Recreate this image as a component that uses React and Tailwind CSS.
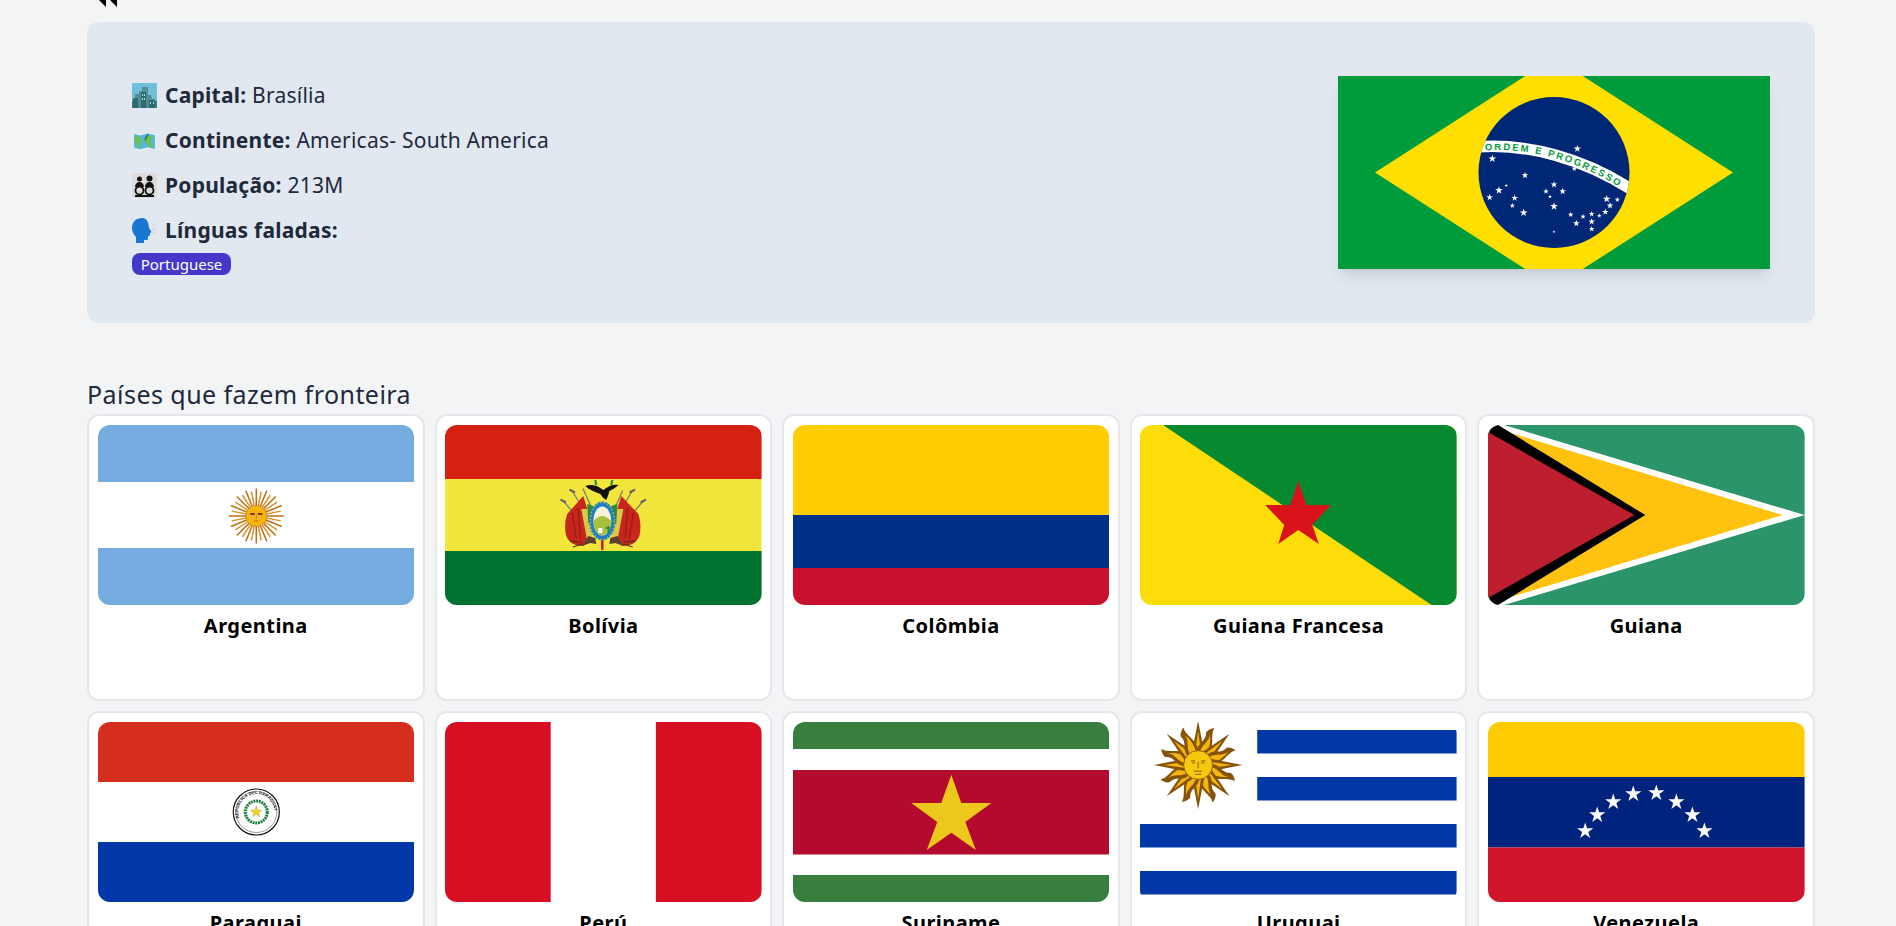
import React from "react";

const starPoints = (cx, cy, r, inner = 0.382, sy = 1) => {
  const pts = [];
  for (let i = 0; i < 10; i++) {
    const rad = i % 2 === 0 ? r : r * inner;
    const a = (Math.PI / 5) * i - Math.PI / 2;
    pts.push(`${cx + rad * Math.cos(a)},${cy + rad * sy * Math.sin(a)}`);
  }
  return pts.join(" ");
};

function Flag({ children, className = "w-full h-[180px] rounded-xl" }) {
  return (
    <svg viewBox="0 0 316 180" preserveAspectRatio="none" className={`block ${className}`}>
      {children}
    </svg>
  );
}

function Argentina() {
  const rays = Array.from({ length: 32 }, (_, i) => i * 11.25);
  return (
    <Flag>
      <rect width="316" height="180" fill="#74acdf" />
      <rect y="57" width="316" height="66" fill="#fff" />
      <g transform="translate(158 91)">
        {rays.map((a, i) => (
          <line key={a} x1="0" y1="-9" x2="0" y2={i % 2 ? -25 : -27.5} stroke={i % 2 ? "#d9942a" : "#b9701f"} strokeWidth="1.5" transform={`rotate(${a})`} />
        ))}
        <circle r="10.5" fill="#f6b40e" stroke="#c98212" strokeWidth="0.6" />
        <path d="M-6 -3h4.5v2h-4.5zM1.5 -3h4.5v2h-4.5z" fill="#85340a" />
        <path d="M0 -1v4M-2 5h4" stroke="#a8641a" strokeWidth="0.8" fill="none" />
      </g>
    </Flag>
  );
}

function Bolivia() {
  return (
    <Flag>
      <rect width="316" height="54" fill="#d52111" />
      <rect y="54" width="316" height="72" fill="#f2e63d" />
      <rect y="126" width="316" height="54" fill="#007230" />
      <g strokeLinecap="round">
        <path d="M118 76l14 16M127 66l11 18M138 64l7 16M198 76l-14 16M187 66l-11 18M177 66l-6 14" stroke="#7d7d70" strokeWidth="1.3" />
        <path d="M116 75l4 2M125 65l4 2M200 75l-4 2M189 65l-4 2" stroke="#666" strokeWidth="2.2" />
        <path d="M138 71l5 16-1 30-4 4c-8 0-14-3-17-10-2-8-1-16 1-22z" fill="#c8261c" />
        <path d="M176 71l-5 16 1 30 5 4c8 0 14-3 17-10 2-8 1-16-1-22z" fill="#c8261c" />
        <path d="M127 88l4 25M133 83l2 30M188 88l-4 25M182 83l-2 30" stroke="#8f1c14" strokeWidth="1.2" />
        <path d="M136 84l8 0 3 28-5 4zM178 84l-8 0-3 28 5 4z" fill="#d8c94a" />
        <path d="M142 79l6 2-1 19-4-2zM172 79l-6 2 1 19 4-2z" fill="#2a8a3a" />
        <path d="M137 121l6-10 7 2 1 6-6-1zM178 121l-6-10-7 2-1 6 6-1z" fill="#5c4030" />
        <path d="M125 116l11 1M128 122l9-3M190 116l-11 1M187 122l-9-3" stroke="#443322" strokeWidth="1" />
        <path d="M157 113v11" stroke="#c8261c" strokeWidth="2.6" />
      </g>
      <ellipse cx="157" cy="96" rx="13" ry="19.5" fill="#1c7fc2" />
      <ellipse cx="157" cy="96" rx="12" ry="18.5" fill="none" stroke="#e5c93c" strokeWidth="1" strokeDasharray="1.5 2" />
      <ellipse cx="157" cy="96" rx="9" ry="14.5" fill="#f7f2d8" />
      <path d="M148 96c3-3 6-5 9-5s6 2 9 5c0 8-4 14-9 14s-9-6-9-14z" fill="#a9bf3e" />
      <path d="M163 101v7M160 103h6" stroke="#2a8a3a" strokeWidth="1.6" />
      <rect x="153" y="103" width="4" height="5" fill="#fff" />
      <path d="M140 61c5-2 11-1 15 2l3 2 3-2c4-3 8-4 12-3-3 3-6 5-9 6l-1 4-2 5-3-2-3-4c-5-2-11-4-15-8z" fill="#111" />
      <path d="M150 55l1 5M167 55l-1 5" stroke="#2a8a3a" strokeWidth="2.2" />
    </Flag>
  );
}

function Colombia() {
  return (
    <Flag>
      <rect width="316" height="90" fill="#ffcd00" />
      <rect y="90" width="316" height="53" fill="#003087" />
      <rect y="143" width="316" height="37" fill="#c8102e" />
    </Flag>
  );
}

function FrenchGuiana() {
  return (
    <Flag>
      <rect width="316" height="180" fill="#fcdd09" />
      <polygon points="23,0 316,0 316,180 291,180" fill="#078930" />
      <polygon points="158,56 166,80 190.500,80 172,100 178.500,119 158,105 138,119 144,100 125,80 150,80" fill="#da121a" />
    </Flag>
  );
}

function Guyana() {
  return (
    <Flag>
      <rect width="316" height="180" fill="#2b9469" />
      <polygon points="0,0 16,0 316,90 16,180 0,180" fill="#fff" />
      <polygon points="0,1 294,90 0,179" fill="#fec20f" />
      <polygon points="0,0 10,0 157,90 10,180 0,180" fill="#000" />
      <polygon points="0,7 146,90 0,173" fill="#bd1f2f" />
    </Flag>
  );
}

function Paraguay() {
  return (
    <Flag>
      <rect width="316" height="60" fill="#d62e1c" />
      <rect y="60" width="316" height="60" fill="#fff" />
      <rect y="120" width="316" height="60" fill="#0038a8" />
      <g transform="translate(158 90)">
        <circle r="23" fill="#fff" stroke="#111" strokeWidth="1.2" />
        <circle r="20.5" fill="none" stroke="#333" strokeWidth="0.5" />
        <path id="pySeal" d="M-17 6A18 18 0 1 1 17 6" fill="none" />
        <text fontSize="4.4" fontWeight="700" fill="#222" fontFamily="Liberation Sans, sans-serif">
          <textPath href="#pySeal">REPUBLICA DEL PARAGUAY</textPath>
        </text>
        <circle r="11" fill="none" stroke="#1e8040" strokeWidth="3" strokeDasharray="2 0.7" />
        <polygon points={starPoints(0, 0, 6)} fill="#f7d417" stroke="#8a7a10" strokeWidth="0.3" />
      </g>
    </Flag>
  );
}

function Peru() {
  return (
    <Flag>
      <rect width="316" height="180" fill="#d91023" />
      <rect x="105.5" width="105" height="180" fill="#fff" />
    </Flag>
  );
}

function Suriname() {
  return (
    <Flag>
      <rect width="316" height="180" fill="#377e3f" />
      <rect y="27" width="316" height="126" fill="#fff" />
      <rect y="48" width="316" height="84.5" fill="#b40a2d" />
      <polygon points="158,52.700 168,81 198,81 172,100 182.500,128 158,110.700 133.500,128 144,100 118,81 148,81" fill="#ecc81d" />
    </Flag>
  );
}

function Uruguay() {
  const angles = Array.from({ length: 16 }, (_, i) => i * 22.5);
  return (
    <Flag>
      <rect width="316" height="180" fill="#fff" />
      <rect x="117" y="8" width="199" height="23.5" fill="#0038a8" />
      <rect x="117" y="55" width="199" height="23.5" fill="#0038a8" />
      <rect y="102" width="316" height="23.5" fill="#0038a8" />
      <rect y="149" width="316" height="23.5" fill="#0038a8" />
      <g transform="translate(58 43) scale(1.03)">
        {angles.map((a, i) => (
          <g key={a} transform={`rotate(${a})`}>
            {i % 2 === 0 ? (
              <>
                <polygon points="-6,-12 0,-43 6,-12" fill="#85540a" />
                <polygon points="-3,-12 0,-33 3,-12" fill="#f6b40e" />
              </>
            ) : (
              <>
                <path d="M-6 -12C-9 -20 -1 -24 -5 -32C-4 -36 -1 -38 1 -39C-1 -32 8 -24 6 -12z" fill="#85540a" />
                <path d="M-3 -12C-5 -20 2 -25 -1 -32C3 -26 4 -18 3 -12z" fill="#f6b40e" />
              </>
            )}
          </g>
        ))}
        <circle r="14" fill="#f6c80e" stroke="#85540a" strokeWidth="0.8" />
        <path d="M-7 -4h4M3 -4h4M-6 -2h3M3 -2h3M0 -3v6M-4 6h8M-3 9h6" stroke="#85540a" strokeWidth="0.9" fill="none" />
      </g>
    </Flag>
  );
}

function Venezuela() {
  const stars = [[97, 109], [109, 93], [125, 80], [145, 72], [168, 71], [188, 80], [204, 93], [216, 109]];
  return (
    <Flag>
      <rect width="316" height="55" fill="#ffcc00" />
      <rect y="55" width="316" height="70.5" fill="#00247d" />
      <rect y="125.5" width="316" height="54.5" fill="#cf142b" />
      {stars.map(([x, y]) => (
        <polygon key={x} points={starPoints(x, y, 8.5)} fill="#fff" />
      ))}
    </Flag>
  );
}

function Brazil() {
  const stars = [
    [352, 176, 3.9], [97, 206, 4.1], [343, 236, 3], [195, 256, 3.5], [139, 287, 1.8], [117, 301, 4.1], [89, 322, 3.5],
    [164, 324, 3.5], [157, 347, 2.8], [191, 368, 4.1], [282, 284, 3.5], [258, 304, 3], [308, 304, 3.5], [270, 320, 2.1],
    [282, 349, 4.1], [332, 374, 3], [369, 380, 2.8], [395, 372, 3], [418, 377, 2.5], [395, 395, 3.5],
    [349, 400, 3.5], [395, 417, 3], [436, 366, 3.5], [450, 347, 3.5], [440, 327, 4.1], [472, 329, 2.8], [282, 425, 1.6],
  ];
  return (
    <svg viewBox="0 0 432 193" className="block w-[432px] h-[193px] shadow-lg shrink-0">
      <rect width="432" height="193" fill="#009c3b" />
      <polygon points="37,96.5 216,-18.5 395,96.5 216,211.5" fill="#ffdf00" />
      <clipPath id="brGlobe">
        <circle cx="216" cy="96.5" r="75.5" />
      </clipPath>
      <circle cx="216" cy="96.5" r="75.5" fill="#002776" />
      <g clipPath="url(#brGlobe)">
        <path d="M138 71C190 67 245 82 296 115" fill="none" stroke="#fff" strokeWidth="11.5" />
        {stars.map(([x, y, r]) => (
          <polygon key={`${x}-${y}`} points={starPoints(x / 3 + 122, y / 3 + 14, r)} fill="#fff" />
        ))}
      </g>
      <path id="brText" d="M147 74.500C190 71 243 84 292 118" fill="none" />
      <text fontSize="9.5" fontWeight="700" fill="#009c3b" letterSpacing="2" fontFamily="Liberation Sans, sans-serif">
        <textPath href="#brText">ORDEM E PROGRESSO</textPath>
      </text>
    </svg>
  );
}

function CityEmoji() {
  return (
    <svg viewBox="0 0 25 25" className="w-[25px] h-[25px] shrink-0">
      <rect width="25" height="25" rx="1" fill="#6fbfd8" />
      <rect y="18" width="25" height="7" fill="#3d7d80" />
      <path d="M3 25V11h4V8h3v-4h6v8h3l1 4h3v9z" fill="#4f9098" />
      <path d="M1 25V15h5v10zM9 25V9h5v16zM17 25V17h6v8z" fill="#2e6b70" />
      <path d="M10 11h1v2h-1zM12 11h1v2h-1zM10 15h1v2h-1zM12 15h1v2h-1zM18 19h1v2h-1zM21 19h1v2h-1z" fill="#a8dbe2" />
    </svg>
  );
}

function MapEmoji() {
  return (
    <svg viewBox="0 0 25 25" className="w-[25px] h-[25px] shrink-0">
      <path d="M1 4l7 2 8-2 8 2v17l-8-2-8 2-7-2z" fill="#e3eaee" />
      <path d="M2 6l6 1.500 8-2 7 1.800V21l-7-1.800-8 2-6-1.700z" fill="#55b7dd" />
      <path d="M3 8l5 1 2 4-2 3 1 5-3-3-3-5zM12 9l5-2 4 2-3 4 3 5-3 2-3-5-3-2z" fill="#6cc24a" />
      <path d="M16 6l-3 6" stroke="#1a5fb4" strokeWidth="1.500" />
    </svg>
  );
}

function FamilyEmoji() {
  return (
    <svg viewBox="0 0 25 25" className="w-[25px] h-[25px] shrink-0">
      <rect width="25" height="25" rx="1.500" fill="#dcdcdc" />
      <circle cx="7.500" cy="6" r="2.500" fill="#111" />
      <circle cx="17.500" cy="5.500" r="3" fill="#111" />
      <path d="M3 14c0-3 2-5 4.500-5S12 11 12 14zM13 14c0-3 2-5 4.500-5S22 11 22 14z" fill="#111" />
      <circle cx="7.500" cy="17.500" r="4" fill="none" stroke="#111" strokeWidth="1.800" />
      <circle cx="17.500" cy="17.500" r="4" fill="none" stroke="#111" strokeWidth="1.800" />
      <path d="M3 23h19" stroke="#111" strokeWidth="2" />
    </svg>
  );
}

function SpeakEmoji() {
  return (
    <svg viewBox="0 0 25 25" className="w-[25px] h-[25px] shrink-0">
      <path d="M10 0C4 0 0 4 0 10c0 4 2 7 4 9v6h8v-3h3c1 0 1-1 1-2v-2h1c1 0 1-1 1-1v-2l1-.500c.6-.4.4-1 0-1.500l-2-3C16.500 4 15 0 10 0z" fill="#1976d2" />
      <path d="M20 11h4M20 14l4 2M20 8l3-2" stroke="#c9d3da" strokeWidth="1" />
    </svg>
  );
}

const neighbours = [
  { name: "Argentina", flag: <Argentina /> },
  { name: "Bolívia", flag: <Bolivia /> },
  { name: "Colômbia", flag: <Colombia /> },
  { name: "Guiana Francesa", flag: <FrenchGuiana /> },
  { name: "Guiana", flag: <Guyana /> },
  { name: "Paraguai", flag: <Paraguay /> },
  { name: "Perú", flag: <Peru /> },
  { name: "Suriname", flag: <Suriname /> },
  { name: "Uruguai", flag: <Uruguay /> },
  { name: "Venezuela", flag: <Venezuela /> },
];

function InfoLine({ icon, label, value }) {
  return (
    <p className="flex items-center gap-[8px] text-[21px] tracking-[0.24px] leading-[28px] mb-[17px]">
      {icon}
      <span>
        <strong className="font-bold">{label}</strong>
        {value ? ` ${value}` : ""}
      </span>
    </p>
  );
}

export default function App() {
  return (
    <div className="h-screen overflow-hidden bg-[#f3f4f6] pl-[87px] pr-[81px] font-['Noto_Sans',sans-serif] text-[#1e293b]">
      <div className="-mt-[17px] h-[39px] flex items-start gap-[18px] pl-[7px]">
        <svg viewBox="0 0 24 24" className="w-[24px] h-[24px]" fill="#000">
          <path d="M0 12L12 0v24zM11 12L23 0v24z" />
        </svg>
        <span className="text-sm leading-[16px] text-gray-400 mt-[2px]">Voltar</span>
      </div>

      <section className="h-[301px] bg-slate-200 rounded-xl px-[45px] flex items-center justify-between">
        <div className="pt-[12px]">
          <InfoLine icon={<CityEmoji />} label="Capital:" value="Brasília" />
          <InfoLine icon={<MapEmoji />} label="Continente:" value="Americas- South America" />
          <InfoLine icon={<FamilyEmoji />} label="População:" value="213M" />
          <div className="-mb-[9px]">
            <InfoLine icon={<SpeakEmoji />} label="Línguas faladas:" />
          </div>
          <span className="inline-block h-[22px] w-[99px] rounded-lg bg-[#4338ca] text-white text-[15px] leading-[22px] text-center">
            Portuguese
          </span>
        </div>
        <Brazil />
      </section>

      <h2 className="mt-[53px] text-[25px] tracking-[0.45px] leading-[36px] h-[38px]">Países que fazem fronteira</h2>
      <div className="grid grid-cols-5 gap-[10px]">
        {neighbours.map((c) => (
          <article key={c.name} className="h-[287px] bg-white border-2 border-gray-200 rounded-xl px-[8.5px] pt-[9px] text-center">
            {c.flag}
            <h3 className="mt-[7px] text-[20px] tracking-[0.45px] leading-[28px] font-bold text-black">{c.name}</h3>
          </article>
        ))}
      </div>
    </div>
  );
}
